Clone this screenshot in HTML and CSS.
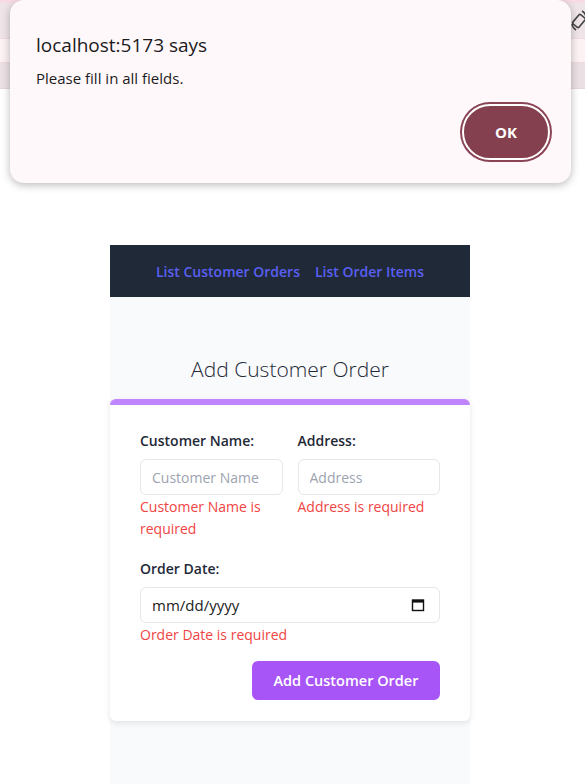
FILE: index.html
```html
<!DOCTYPE html>
<html>
<head>
<meta charset="utf-8">
<link rel="stylesheet" href="styles.css">
</head>
<body>
<div class="backdrop">
  <div class="strip s1"></div>
  <div class="strip s2"></div>
  <div class="strip s3"></div>
  <div class="strip s4"></div>
  <svg class="corner-icon" width="16" height="24" viewBox="0 0 16 24"><g fill="none" stroke="#444" stroke-width="1.6"><rect x="4" y="6" width="8" height="12" rx="1.5" transform="rotate(40 8 12)"/><path d="M1 15 a8 8 0 0 0 4 6"/><path d="M11 2 a8 8 0 0 1 4 6"/></g></svg>
</div>

<main class="page">
  <div class="app">
    <nav class="nav">
      <a class="nav-link">List Customer Orders</a>
      <a class="nav-link">List Order Items</a>
    </nav>
    <section class="content">
      <h1 class="title">Add Customer Order</h1>
      <form class="card">
        <div class="row">
          <div class="field">
            <label class="label">Customer Name:</label>
            <input class="input" placeholder="Customer Name">
            <div class="error">Customer Name is required</div>
          </div>
          <div class="field">
            <label class="label">Address:</label>
            <input class="input" placeholder="Address">
            <div class="error">Address is required</div>
          </div>
        </div>
        <div class="field full">
          <label class="label">Order Date:</label>
          <div class="input date">
            <span>mm/dd/yyyy</span>
            <svg width="14" height="14" viewBox="0 0 14 14"><rect x="1.5" y="2" width="11" height="10.5" fill="none" stroke="#111" stroke-width="1.4"/><rect x="1.5" y="2" width="11" height="2.6" fill="#111"/></svg>
          </div>
          <div class="error">Order Date is required</div>
        </div>
        <div class="actions">
          <button type="button" class="submit">Add Customer Order</button>
        </div>
      </form>
    </section>
  </div>
</main>

<div class="dialog">
  <div class="dialog-title">localhost:5173 says</div>
  <div class="dialog-msg">Please fill in all fields.</div>
  <div class="dialog-actions">
    <button type="button" class="ok">OK</button>
  </div>
</div>
</body>
</html>
```

FILE: styles.css
```css
html, body {
  margin: 0;
  padding: 0;
  background: #ffffff;
  font-family: "Open Sans", "Noto Sans", sans-serif;
  height: 784px;
  overflow: hidden;
}

.backdrop {
  position: relative;
  height: 88px;
  border-bottom: 1px solid #e6d6dc;
}
.strip { width: 100%; }
.s1 { height: 3px; background: #f9dce3; }
.s2 { height: 35px; background: #efe5e8; border-bottom: 1px solid #f3d9df; }
.s3 { height: 23px; background: #fcf2f4; border-bottom: 1px solid #f1d8de; }
.s4 { height: 25px; background: #ebe1e5; }
.corner-icon { position: absolute; left: 571px; top: 9px; }

.page {
  display: flex;
  justify-content: center;
  padding-right: 5px;
  padding-top: 156px;
}
.app {
  width: 360px;
  background: #f9fafb;
  height: 540px;
}
.nav {
  height: 52px;
  background: #1f2937;
  display: flex;
  justify-content: center;
  align-items: center;
  gap: 15px;
}
.nav-link {
  color: #5a5ff2;
  font-weight: 600;
  font-size: 14px;
}
.content { padding-top: 50px; }
.title {
  margin: 0;
  text-align: center;
  font-weight: 300;
  font-size: 21px;
  color: #1f2937;
  line-height: 44px;
}
.card {
  margin-top: 8px;
  background: #fff;
  border-top: 6px solid #c084fc;
  border-radius: 6px;
  box-shadow: 0 2px 6px rgba(0,0,0,0.10);
  padding: 26px 30px 21px 30px;
}
.row {
  display: flex;
  gap: 15px;
}
.field { flex: 1; display: flex; flex-direction: column; }
.full { margin-top: 19px; }
.label {
  font-size: 14px;
  font-weight: 600;
  color: #1f2937;
  line-height: 20px;
  margin-bottom: 8px;
}
.input {
  box-sizing: border-box;
  height: 36px;
  border: 1px solid #e5e7eb;
  border-radius: 6px;
  padding: 0 11px;
  font-family: inherit;
  font-size: 14px;
  color: #111827;
  width: 100%;
  background: #fff;
  outline: none;
}
.input::placeholder { color: #9ca3af; }
.date {
  display: flex;
  align-items: center;
  justify-content: space-between;
  padding-right: 14px;
  font-size: 15px;
  color: #222;
}
.error {
  color: #ef4444;
  font-size: 14px;
  line-height: 22px;
  margin-top: 1px;
}
.actions {
  display: flex;
  justify-content: flex-end;
  margin-top: 15px;
}
.submit {
  width: 188px;
  height: 39px;
  background: #a855f7;
  color: #fff;
  font-family: inherit;
  font-weight: 600;
  font-size: 14.5px;
  border: none;
  border-radius: 6px;
}

.dialog {
  position: absolute;
  left: 10px;
  top: 0;
  width: 561px;
  height: 183px;
  box-sizing: border-box;
  background: #fff8fb;
  border-radius: 14px;
  box-shadow: 0 2px 8px rgba(0,0,0,0.28);
  padding: 32px 21px 0 26px;
}
.dialog-title {
  font-size: 19px;
  font-weight: 500;
  color: #1b1b1b;
  line-height: 26px;
}
.dialog-msg {
  margin-top: 10px;
  font-size: 15px;
  color: #1b1b1b;
  line-height: 20px;
}
.dialog-actions {
  display: flex;
  justify-content: flex-end;
  margin-top: 16px;
}
.ok {
  width: 88px;
  height: 56px;
  border-radius: 28px;
  background: #84404f;
  color: #fff;
  font-family: inherit;
  font-weight: 700;
  font-size: 15px;
  border: 2px solid #fff;
  box-shadow: 0 0 0 2px #8a4456;
}
```
